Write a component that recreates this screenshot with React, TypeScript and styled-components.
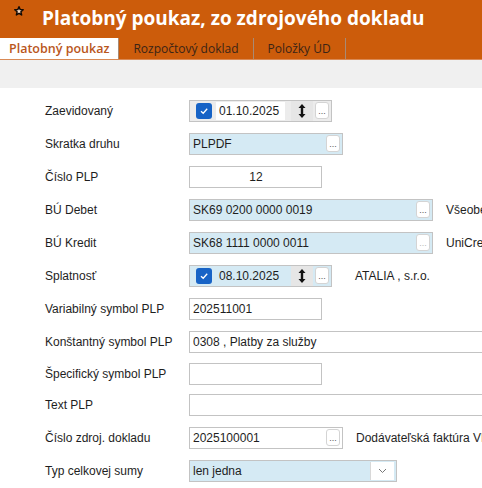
import React from 'react';
import styled, { createGlobalStyle } from 'styled-components';

const GlobalStyle = createGlobalStyle`
  html, body {
    margin: 0;
    padding: 0;
    background: #ffffff;
    overflow: hidden;
  }
  body {
    font-family: 'Liberation Sans', Arial, sans-serif;
    color: #1e1e1e;
  }
`;

const Page = styled.div`
  width: 620px;
  min-height: 488px;
  background: #ffffff;
`;

const Header = styled.div`
  display: flex;
  align-items: flex-start;
  height: 37px;
  background: #cc5c0b;
`;

const Star = styled.span`
  display: flex;
  width: 10px;
  margin: 6px 0 0 14px;
`;

const Title = styled.h1`
  margin: 6px 0 0 18px;
  font-family: 'Open Sans', 'Liberation Sans', sans-serif;
  font-weight: 700;
  font-size: 19px;
  line-height: 25px;
  color: #ffffff;
  white-space: nowrap;
`;

const TabBar = styled.div`
  display: flex;
  align-items: stretch;
  height: 22px;
  background: #cc5c0b;
  border-bottom: 1px solid #d98a55;
`;

const Tab = styled.div<{ $active?: boolean }>`
  display: flex;
  align-items: center;
  padding: 0 ${p => (p.$active ? '9px' : '14px')};
  font-family: 'Open Sans', 'Liberation Sans', sans-serif;
  font-size: ${p => (p.$active ? '12.5px' : '12px')};
  font-weight: ${p => (p.$active ? 600 : 400)};
  color: ${p => (p.$active ? '#b9561b' : '#3a2416')};
  background: ${p => (p.$active ? '#ffffff' : 'transparent')};
  margin-top: 1px;
  white-space: nowrap;
  & + & {
    border-left: 1px solid ${p => (p.$active ? 'transparent' : '#a88a74')};
  }
`;

const Toolbar = styled.div`
  height: 28px;
  background: #f0f0f0;
`;

const Form = styled.div`
  display: flex;
  flex-direction: column;
  padding: 6px 0 0 45px;
`;

const Row = styled.div<{ $h?: number }>`
  display: flex;
  align-items: center;
  height: ${p => p.$h ?? 33}px;
`;

const Label = styled.div`
  width: 144px;
  flex: none;
  font-size: 12px;
  white-space: nowrap;
`;

type Tone = 'blue' | 'white' | 'gray';
const fills: Record<Tone, string> = {
  blue: '#d5eaf4',
  white: '#ffffff',
  gray: '#ececec',
};

const Box = styled.div<{ $w: number; $tone: Tone; $center?: boolean }>`
  box-sizing: border-box;
  display: flex;
  align-items: center;
  justify-content: ${p => (p.$center ? 'center' : 'flex-start')};
  width: ${p => p.$w}px;
  height: 22px;
  flex: none;
  padding: 0 2px 0 3px;
  background: ${p => fills[p.$tone]};
  border: 1px solid #c3c3c3;
  font-size: 12px;
  white-space: nowrap;
`;

const Value = styled.span`
  flex: 1;
  overflow: hidden;
`;

const Dots = styled.span<{ $faded?: boolean }>`
  box-sizing: border-box;
  flex: none;
  width: 14px;
  height: 17px;
  display: flex;
  align-items: flex-end;
  justify-content: center;
  padding-bottom: 2px;
  background: #ffffff;
  border: 1px solid #d4d4d4;
  border-radius: 3px;
  font-size: 9px;
  line-height: 9px;
  color: ${p => (p.$faded ? '#b8b8b8' : '#555555')};
`;

const Check = styled.span`
  flex: none;
  width: 16px;
  height: 16px;
  border-radius: 3px;
  background: #1763c6;
  display: flex;
  align-items: center;
  justify-content: center;
  margin: 0 4px 0 3px;
`;

const DateText = styled.span<{ $plain?: boolean }>`
  display: flex;
  align-items: center;
  width: 72px;
  height: 18px;
  padding-left: 3px;
  background: ${p => (p.$plain ? 'transparent' : '#ffffff')};
  font-size: 12px;
`;

const Spin = styled.span`
  flex: none;
  display: flex;
  align-items: center;
  justify-content: center;
  width: 22px;
  height: 20px;
  margin-left: 6px;
  background: #e6e6e6;
`;

const Extra = styled.div<{ $gap?: number }>`
  margin-left: ${p => p.$gap ?? 13}px;
  font-size: 12px;
  white-space: nowrap;
`;

const Chevron = styled.span`
  box-sizing: border-box;
  margin-left: auto;
  width: 24px;
  height: 18px;
  display: flex;
  align-items: center;
  justify-content: center;
  background: #ffffff;
  border-left: 1px solid #d8d8d8;
`;

const StarIcon = () => (
  <svg width="10" height="10" viewBox="0 0 10 10">
    <path
      d="M5 0.8 L6.2 3.6 L9.2 3.8 L6.9 5.8 L7.6 8.9 L5 7.3 L2.4 8.9 L3.1 5.8 L0.8 3.8 L3.8 3.6 Z"
      fill="#f4d8c4"
      stroke="#140a04"
      strokeWidth="1.5"
      strokeLinejoin="round"
    />
  </svg>
);

const CheckMark = () => (
  <svg width="10" height="10" viewBox="0 0 10 10">
    <path d="M2 5.2 L4.2 7.3 L8.2 2.8" fill="none" stroke="#ffffff" strokeWidth="1.3" />
  </svg>
);

const SpinIcon = () => (
  <svg width="8" height="16" viewBox="0 0 8 16">
    <path d="M4 1 L7.5 5 L5.2 5 L5.2 11 L7.5 11 L4 15 L0.5 11 L2.8 11 L2.8 5 L0.5 5 Z" fill="#111111" />
  </svg>
);

const ChevronIcon = () => (
  <svg width="9" height="6" viewBox="0 0 9 6">
    <path d="M1 1 L4.5 4.5 L8 1" fill="none" stroke="#777777" strokeWidth="1" />
  </svg>
);

const DateField: React.FC<{ value: string; tone: Tone }> = ({ value, tone }) => (
  <Box $w={143} $tone={tone}>
    <Check>
      <CheckMark />
    </Check>
    <DateText $plain={tone === 'blue'}>{value}</DateText>
    <Spin>
      <SpinIcon />
    </Spin>
    <Dots style={{ marginLeft: 2 }}>...</Dots>
  </Box>
);

const App: React.FC = () => (
  <Page>
    <GlobalStyle />
    <Header>
      <Star>
        <StarIcon />
      </Star>
      <Title>Platobný poukaz, zo zdrojového dokladu</Title>
    </Header>
    <TabBar>
      <Tab $active>Platobný poukaz</Tab>
      <Tab>Rozpočtový doklad</Tab>
      <Tab>Položky ÚD</Tab>
      <Tab />
    </TabBar>
    <Toolbar />
    <Form>
      <Row>
        <Label>Zaevidovaný</Label>
        <DateField value="01.10.2025" tone="gray" />
      </Row>
      <Row>
        <Label>Skratka druhu</Label>
        <Box $w={154} $tone="blue">
          <Value>PLPDF</Value>
          <Dots>...</Dots>
        </Box>
      </Row>
      <Row>
        <Label>Číslo PLP</Label>
        <Box $w={133} $tone="white" $center>
          12
        </Box>
      </Row>
      <Row>
        <Label>BÚ Debet</Label>
        <Box $w={244} $tone="blue">
          <Value>SK69 0200 0000 0019</Value>
          <Dots>...</Dots>
        </Box>
        <Extra>Všeobecná úverová banka</Extra>
      </Row>
      <Row>
        <Label>BÚ Kredit</Label>
        <Box $w={244} $tone="blue">
          <Value>SK68 1111 0000 0011</Value>
          <Dots $faded>...</Dots>
        </Box>
        <Extra>UniCredit Bank</Extra>
      </Row>
      <Row>
        <Label>Splatnosť</Label>
        <DateField value="08.10.2025" tone="blue" />
        <Extra $gap={23}>ATALIA , s.r.o.</Extra>
      </Row>
      <Row>
        <Label>Variabilný symbol PLP</Label>
        <Box $w={133} $tone="white">
          <Value>202511001</Value>
        </Box>
      </Row>
      <Row>
        <Label>Konštantný symbol PLP</Label>
        <Box $w={400} $tone="white">
          <Value>0308 , Platby za služby</Value>
        </Box>
      </Row>
      <Row $h={31}>
        <Label>Špecifický symbol PLP</Label>
        <Box $w={133} $tone="white" />
      </Row>
      <Row $h={32}>
        <Label>Text PLP</Label>
        <Box $w={400} $tone="white" />
      </Row>
      <Row>
        <Label>Číslo zdroj. dokladu</Label>
        <Box $w={154} $tone="white">
          <Value>2025100001</Value>
          <Dots>...</Dots>
        </Box>
        <Extra>Dodávateľská faktúra VF</Extra>
      </Row>
      <Row $h={34}>
        <Label>Typ celkovej sumy</Label>
        <Box $w={208} $tone="blue">
          <Value>len jedna</Value>
          <Chevron>
            <ChevronIcon />
          </Chevron>
        </Box>
      </Row>
    </Form>
  </Page>
);

export default App;
